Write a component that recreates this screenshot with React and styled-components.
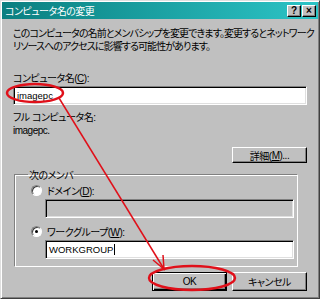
import React from 'react';
import styled, { createGlobalStyle } from 'styled-components';

const GlobalStyle = createGlobalStyle`
  html, body {
    margin: 0;
    padding: 0;
    background: #c0c0c0;
  }
  body {
    font-family: "Liberation Sans", "Noto Sans CJK JP", sans-serif;
    font-size: 10px;
    color: #000;
  }
`;

const Window = styled.div`
  position: relative;
  width: 320px;
  height: 299px;
  box-sizing: border-box;
  background: #c0c0c0;
  border: 1px solid;
  border-color: #dfdfdf #404040 #404040 #dfdfdf;
  box-shadow: inset 1px 1px 0 #fff, inset -1px -1px 0 #808080;
  padding: 1px;
  display: flex;
  flex-direction: column;
`;

const TitleBar = styled.div`
  height: 17px;
  display: flex;
  align-items: center;
  justify-content: space-between;
  padding: 0 2px 0 3px;
  background: linear-gradient(to right, #0b7f80, #2cc4c6);
  color: #fff;
`;

const Title = styled.span`
  font-size: 10px;
  letter-spacing: -0.5px;
  font-feature-settings: "palt";
`;

const TitleButtons = styled.div`
  display: flex;
  gap: 1px;
`;

const TitleButton = styled.div`
  width: 14px;
  height: 12px;
  box-sizing: border-box;
  background: #c0c0c0;
  border: 1px solid;
  border-color: #fff #000 #000 #fff;
  box-shadow: inset -1px -1px 0 #808080;
  color: #000;
  font-weight: bold;
  font-size: 10px;
  line-height: 10px;
  text-align: center;
  font-family: "Liberation Sans", sans-serif;
`;

const Body = styled.div`
  flex: 1;
  display: flex;
  flex-direction: column;
  padding: 8px 11px 0 11px;
`;

const Text = styled.div`
  font-size: ${(p) => p.$fs || 10}px;
  line-height: 13px;
  letter-spacing: ${(p) => (p.$tight ? -0.9 : -0.5)}px;
  font-feature-settings: "palt";
  margin-top: ${(p) => p.$mt || 0}px;
  white-space: nowrap;
`;

const Field = styled.div`
  height: 19px;
  box-sizing: border-box;
  margin-top: ${(p) => p.$mt || 0}px;
  margin-left: ${(p) => p.$ml || 0}px;
  width: ${(p) => p.$w || 'auto'};
  background: ${(p) => (p.$disabled ? '#c0c0c0' : '#fff')};
  border: 1px solid;
  border-color: #808080 #fff #fff #808080;
  box-shadow: inset 1px 1px 0 #000, inset -1px -1px 0 #dfdfdf;
  padding: 0 3px;
  display: flex;
  align-items: center;
  font-size: 9.5px;
`;

const Caret = styled.span`
  display: inline-block;
  width: 1px;
  height: 11px;
  background: #000;
  margin-left: 1px;
`;

const ButtonRow = styled.div`
  display: flex;
  justify-content: flex-end;
  gap: 5px;
  margin-top: ${(p) => p.$mt || 0}px;
`;

const Button = styled.div`
  width: 75px;
  height: ${(p) => p.$h || 19}px;
  box-sizing: border-box;
  border: 1px solid;
  border-color: ${(p) => (p.$default ? '#000' : '#fff #000 #000 #fff')};
  box-shadow: ${(p) =>
    p.$default
      ? 'inset 1px 1px 0 #fff, inset -1px -1px 0 #000, inset -2px -2px 0 #808080'
      : 'inset -1px -1px 0 #808080'};
  display: flex;
  align-items: center;
  justify-content: center;
  font-size: 10px;
  letter-spacing: -0.5px;
  font-feature-settings: "palt";
`;

const Group = styled.fieldset`
  margin: 4px 9px 0 1px;
  padding: 1px 0 7px 16px;
  border: 1px solid;
  border-color: #808080 #fff #fff #808080;
  box-shadow: inset 1px 1px 0 #fff, 1px 1px 0 #808080 inset;
  display: flex;
  flex-direction: column;
  min-width: 0;
`;

const Legend = styled.legend`
  padding: 0 1px;
  margin-left: -3px;
  font-size: 10px;
  letter-spacing: -0.5px;
  font-feature-settings: "palt";
`;

const RadioRow = styled.div`
  display: flex;
  align-items: center;
  gap: 5px;
  margin-top: ${(p) => p.$mt || 0}px;
  font-size: 10px;
  letter-spacing: -0.5px;
  font-feature-settings: "palt";
`;

const Radio = styled.span`
  width: 11px;
  height: 11px;
  box-sizing: border-box;
  border-radius: 50%;
  background: #fff;
  border: 1px solid;
  border-color: #808080 #fff #fff #808080;
  box-shadow: inset 1px 1px 0 #404040;
  display: flex;
  align-items: center;
  justify-content: center;
  &::after {
    content: '';
    width: 3px;
    height: 3px;
    border-radius: 50%;
    background: ${(p) => (p.$checked ? '#000' : 'transparent')};
  }
`;

const U = styled.span`
  text-decoration: underline;
`;

const Overlay = styled.svg`
  position: absolute;
  left: 0;
  top: 0;
  pointer-events: none;
`;

export default function App() {
  return (
    <>
      <GlobalStyle />
      <Window>
        <TitleBar>
          <Title>コンピュータ名の変更</Title>
          <TitleButtons>
            <TitleButton>?</TitleButton>
            <TitleButton>×</TitleButton>
          </TitleButtons>
        </TitleBar>
        <Body>
          <Text $tight>このコンピュータの名前とメンバシップを変更できます。変更するとネットワーク</Text>
          <Text $tight>リソースへのアクセスに影響する可能性があります。</Text>
          <Text $mt={19}>コンピュータ名(<U>C</U>):</Text>
          <Field $mt={1}>imagepc</Field>
          <Text $mt={6}>フル コンピュータ名:</Text>
          <Text>imagepc.</Text>
          <ButtonRow $mt={10}>
            <Button $h={16}>詳細(<U>M</U>)...</Button>
          </ButtonRow>
          <Group>
            <Legend>次のメンバ</Legend>
            <RadioRow>
              <Radio />
              <span>ドメイン(<U>D</U>):</span>
            </RadioRow>
            <Field $mt={1} $ml={14} $w="249px" $disabled />
            <RadioRow $mt={6}>
              <Radio $checked />
              <span>ワークグループ(<U>W</U>):</span>
            </RadioRow>
            <Field $mt={1} $ml={14} $w="249px">
              WORKGROUP<Caret />
            </Field>
          </Group>
          <ButtonRow $mt={5}>
            <Button $default>OK</Button>
            <Button>キャンセル</Button>
          </ButtonRow>
        </Body>
        <Overlay width="320" height="299" viewBox="0 0 320 299">
          <g fill="none" stroke="#e0101a" strokeWidth="2.5">
            <ellipse cx="34" cy="92" rx="28" ry="9" />
            <ellipse cx="191" cy="277" rx="43" ry="12" />
            <line x1="58" y1="97" x2="163" y2="268" strokeWidth="1.5" />
            <polyline points="152,259 163,268 162,254" strokeWidth="1.5" />
          </g>
        </Overlay>
      </Window>
    </>
  );
}
